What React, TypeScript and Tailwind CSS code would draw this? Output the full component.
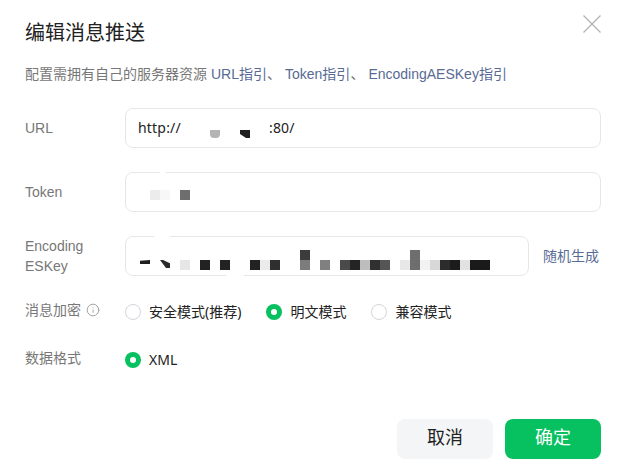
import { Info } from 'lucide-react';

const labelClass = "w-[100px] text-sm text-[#777777] [font-family:'Liberation_Sans','Noto_Sans_CJK_SC',sans-serif]";
const linkClass = "text-[#576b95] [font-family:'Liberation_Sans','Noto_Sans_CJK_SC',sans-serif]";

const encodingBlocks = [
  'h-[4px] bg-[#1f1f1f] [clip-path:polygon(0_20%,100%_0,100%_100%,0_100%)]',
  'h-[10px] bg-white',
  'h-[8px] bg-[#2a2a2a] [clip-path:polygon(0_0,30%_0,100%_40%,100%_100%,60%_100%)]',
  'h-[10px] bg-white',
  'h-[10px] bg-[#e6e6e6]',
  'h-[10px] bg-white',
  'h-[10px] bg-[#222222]',
  'h-[10px] bg-white',
  'h-[10px] bg-[#222222]',
  'h-[10px] bg-white',
  'h-[10px] bg-white',
  'h-[10px] bg-[#222222]',
  'h-[10px] bg-[#ebebeb]',
  'h-[10px] bg-[#2f2f2f]',
];

const encodingBlocksRight = [
  'bg-white',
  'bg-[#808080]',
  'bg-white',
  'bg-[#4a4a4a]',
  'bg-[#242424]',
  'bg-[#bdbdbd]',
  'bg-[#303030]',
  'bg-[#555555]',
  'bg-white',
  'bg-[#e8e8e8]',
  'bg-[#6e6e6e]',
  'bg-[#f2f2f2]',
  'bg-[#d8d8d8]',
  'bg-[#2c2c2c]',
  'bg-[#1c1c1c]',
  'bg-[#e2e2e2]',
  'bg-[#1a1a1a]',
  'bg-[#1a1a1a]',
];

function Radio({ checked, label }: { checked?: boolean; label: string }) {
  return (
    <label className="flex items-center gap-2">
      {checked ? (
        <span className="flex h-4 w-4 items-center justify-center rounded-full bg-[#07c160]">
          <span className="h-1.5 w-1.5 rounded-full bg-white" />
        </span>
      ) : (
        <span className="h-4 w-4 rounded-full border border-[#d5d5dc] bg-white" />
      )}
      <span className="text-sm text-[#222222]">{label}</span>
    </label>
  );
}

export default function App() {
  return (
    <div className='relative h-[469px] w-[623px] overflow-hidden bg-white pl-[25px] pr-[22px] pt-[19px] [font-family:"Noto_Sans","Noto_Sans_CJK_SC",sans-serif]'>
      <button className="absolute left-[582px] top-[14px] text-[#b5b5b5]">
        <svg width="20" height="20" viewBox="0 0 20 20" fill="none" stroke="currentColor" strokeWidth="1.3">
          <path d="M1.5 1.5 18.5 18.5M18.5 1.5 1.5 18.5" />
        </svg>
      </button>

      <h2 className="text-xl leading-7 font-normal text-[#222222]">编辑消息推送</h2>

      <p className="mt-[17px] flex h-5 items-center text-sm text-[#777777]">
        配置需拥有自己的服务器资源
        <a className={`ml-1 ${linkClass}`}>URL指引</a>
        <span>、</span>
        <a className={`ml-1 ${linkClass}`}>Token指引</a>
        <span>、</span>
        <a className={`ml-1 ${linkClass}`}>EncodingAESKey指引</a>
      </p>

      <div className="mt-6 flex items-center">
        <span className={labelClass}>URL</span>
        <div className="relative flex h-10 w-[476px] items-center rounded-lg border border-[#e7e7e7] pl-3 text-sm tracking-[0.2px] text-[#222222]">
          <span>http://</span>
          <span className="ml-[88px]">:80/</span>
          <span className="absolute left-[84px] top-[21px] h-[8px] w-[10px] rounded-b-[4px] bg-[#b4b4b4]" />
          <span className="absolute left-[114px] top-[21px] h-[8px] w-[10px] bg-[#1f1f1f] [clip-path:polygon(0_0,100%_0,100%_100%,60%_100%,0_50%)]" />
        </div>
      </div>

      <div className="mt-6 flex items-center">
        <span className={labelClass}>Token</span>
        <div className="relative h-10 w-[476px] rounded-lg border border-[#e7e7e7]">
          <span className="absolute left-[34px] -top-px h-[3px] w-[6px] bg-white" />
          <span className="absolute left-[24px] top-[17px] h-[10px] w-[10px] bg-[#ececec]" />
          <span className="absolute left-[34px] top-[17px] h-[10px] w-[10px] bg-[#f7f7f7]" />
          <span className="absolute left-[54px] top-[17px] h-[10px] w-[10px] bg-[#6e6e6e]" />
        </div>
      </div>

      <div className="mt-6 flex items-center">
        <span className={`relative break-all pr-[28px] leading-5 ${labelClass}`}>
          EncodingAESKey
          <span className="absolute left-[58px] top-0 h-[15px] w-[12px] bg-white" />
        </span>
        <div className="relative h-10 w-[404px] rounded-lg border border-[#e7e7e7]">
          <span className="absolute left-[28px] -top-px h-[3px] w-[16px] bg-white" />
          <span className="absolute left-[100px] -bottom-px h-[3px] w-[18px] bg-white" />
          <div className="absolute left-[14px] top-[23px] flex">
            {encodingBlocks.map((cls, i) => (
              <span key={i} className={`w-[10px] ${cls}`} />
            ))}
          </div>
          <span className="absolute left-[174px] top-[13px] h-[10px] w-[10px] bg-[#3c3c3c]" />
          <span className="absolute left-[174px] top-[23px] h-[10px] w-[10px] bg-[#7c7c7c]" />
          <div className="absolute left-[184px] top-[23px] flex">
            {encodingBlocksRight.map((cls, i) => (
              <span key={i} className={`h-[10px] w-[10px] ${cls}`} />
            ))}
          </div>
          <span className="absolute left-[284px] top-[13px] h-[10px] w-[10px] bg-[#6e6e6e]" />
        </div>
        <a className="ml-[14px] text-sm text-[#576b95]">随机生成</a>
      </div>

      <div className="mt-[26px] flex h-5 items-center">
        <div className="flex w-[100px] items-center gap-[5px] pb-1 text-sm text-[#777777]">
          消息加密
          <Info className="h-3.5 w-3.5 text-[#999999]" strokeWidth={1.5} />
        </div>
        <div className="flex items-center gap-[25px]">
          <Radio label="安全模式(推荐)" />
          <Radio checked label="明文模式" />
          <Radio label="兼容模式" />
        </div>
      </div>

      <div className="mt-7 flex h-5 items-center">
        <span className="w-[100px] pb-1 text-sm text-[#777777]">数据格式</span>
        <Radio checked label="XML" />
      </div>

      <div className="mt-[49px] flex justify-end gap-3">
        <button className="h-10 w-24 rounded-lg bg-[#f4f5f7] pb-1 text-lg text-[#222222]">取消</button>
        <button className="h-10 w-24 rounded-lg bg-[#07c160] pb-1 text-lg text-white">确定</button>
      </div>
    </div>
  );
}
